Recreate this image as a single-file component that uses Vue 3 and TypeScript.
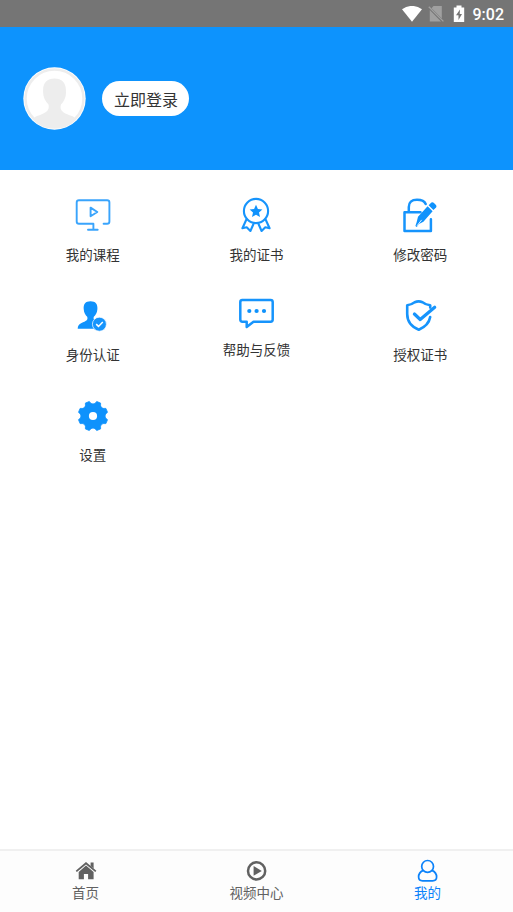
<script setup lang="ts">
import { ref } from 'vue'

type IconName = 'course' | 'certificate' | 'password' | 'identity' | 'feedback' | 'shield' | 'settings'
type TabName = 'home' | 'video' | 'mine'

interface MenuItem {
  icon: IconName
  label: string
}

const menu: MenuItem[] = [
  { icon: 'course', label: '我的课程' },
  { icon: 'certificate', label: '我的证书' },
  { icon: 'password', label: '修改密码' },
  { icon: 'identity', label: '身份认证' },
  { icon: 'feedback', label: '帮助与反馈' },
  { icon: 'shield', label: '授权证书' },
  { icon: 'settings', label: '设置' },
]

const tabs: { name: TabName; label: string }[] = [
  { name: 'home', label: '首页' },
  { name: 'video', label: '视频中心' },
  { name: 'mine', label: '我的' },
]

const active = ref<TabName>('mine')
</script>

<template>
  <div class="screen">
    <div class="status">
      <svg class="wifi" viewBox="0 0 20 16"><path d="M0 3.2Q10-3.4 20 3.2L10 15.8Z" fill="#fff" /></svg>
      <svg class="sim" viewBox="0 0 16 18">
        <path d="M5.5 1H13.8V13.4L3.6 3.2ZM1.8 5L13 16.4H1.8Z" fill="#a0a0a0" />
        <path d="M.8 1.8L15.4 16.4" stroke="#a0a0a0" stroke-width="1.3" />
      </svg>
      <svg class="battery" viewBox="0 0 12 18">
        <path d="M3.5.5H8.5V2.5H11.2V17H.8V2.5H3.5Z" fill="#fff" />
        <path d="M7 4.5L3 10.3H5.5V15L9 9H6.7Z" fill="#757575" />
      </svg>
      <span class="time">9:02</span>
    </div>

    <header class="profile">
      <svg class="avatar" viewBox="0 0 63 63">
        <circle cx="31.5" cy="31.5" r="31.2" fill="#fff" />
        <circle cx="31.5" cy="31.5" r="29" fill="#fff" stroke="#ededed" stroke-width="2.5" />
        <path d="M31.5 11.5C24 11.5 19.8 16 20.1 24C19.8 29 21.8 34 25.5 37.5C27 44 22 46 14 49Q11 50.2 10.6 52A29 29 0 0 0 52.4 52Q52 50.2 49 49C41 46 36 44 38 37.5C41.5 34 43.5 29 42.9 24C43.2 16 39 11.5 31.5 11.5Z" fill="#ededed" />
      </svg>
      <button class="login">立即登录</button>
    </header>

    <main class="menu">
      <div v-for="item in menu" :key="item.icon" class="item">
        <svg class="icon" :class="item.icon" :viewBox="item.icon === 'feedback' ? '0 0 40 35' : '0 0 40 40'">
          <g v-if="item.icon === 'course'" class="line" stroke-width="1.9">
            <path opacity=".85" d="M15 34.7H24.7M20.4 34.7V28.7H6Q3.7 28.7 3.7 26.4V7.6Q3.7 5.3 6 5.3H34.1Q36.4 5.3 36.4 7.6V26.4Q36.4 28.7 34.1 28.7H30.6" />
            <path d="M17.6 12.6L24.3 17L17.6 21.2Z" opacity=".85" />
          </g>
          <g v-else-if="item.icon === 'certificate'" class="line" stroke-width="2.1">
            <circle cx="20" cy="16" r="12.1" />
            <path d="M10.4 24.5L6.4 33.2L10.7 32.3L14.4 36L17.7 28.5M29.6 24.5L33.6 33.2L29.3 32.3L25.6 36L22.3 28.5" />
            <path class="solid" d="M20 9.8L21.9 13.9L26.4 14.4L23 17.5L24 22L20 19.7L16 22L17 17.5L13.6 14.4L18.1 13.9Z" />
          </g>
          <g v-else-if="item.icon === 'password'" class="line" stroke-width="2.5">
            <path d="M20.5 17.2H4.5V36H30.9V24.3M8.8 17V12Q8.8 4.8 17 4.8Q24 4.8 25.7 9" />
            <path class="solid" d="M27.6 11.2L32.6 16.2L23.4 26.8L19 29L16.8 32L15.4 31.1L16.7 27L18 21.7Z" />
            <path class="solid" d="M28.6 10.3L31.4 7.6Q32.6 6.7 33.7 7.8L36 10Q37 11.3 36.1 12.4L33.4 15.1Z" />
            <path d="M17.3 30.5L21.4 25.2" stroke="#fff" stroke-width=".9" />
          </g>
          <g v-else-if="item.icon === 'identity'">
            <path fill="#0f92fc" d="M17.5 6.3C12.6 6.3 10.3 9 10.7 14C10.9 18 12.6 20.3 14.2 21.8C15.3 25.3 13 26 8.5 28Q4.7 29.6 4.7 33.8H25L24.5 26C21.5 25.2 20 24.8 20.8 21.8C22.5 20 24.2 18 24.4 14C24.8 9 22.4 6.3 17.5 6.3Z" />
            <circle cx="26.4" cy="29.2" r="7" fill="#1694fc" stroke="#fff" stroke-width=".7" />
            <path d="M23.2 29.1L25.5 31.4L29.8 27" fill="none" stroke="#fff" stroke-width="1.5" />
          </g>
          <g v-else-if="item.icon === 'feedback'" class="line" stroke-width="2.5">
            <path d="M6 4.9H34.6Q36.7 4.9 36.7 7V24.6Q36.7 26.7 34.6 26.7H17.5L10.7 31.9V26.7H6.4Q4.3 26.7 4.3 24.6V7Q4.3 4.9 6.4 4.9Z" />
            <g fill="#0f92fc" stroke="none"><circle cx="13.3" cy="16" r="2.1" /><circle cx="20.6" cy="16" r="2.1" /><circle cx="28" cy="16" r="2.1" /></g>
          </g>
          <g v-else-if="item.icon === 'shield'" class="line" stroke-width="2.6">
            <path d="M30.2 12.6V10.2Q26 9.8 22.5 7.2Q18.6 5.6 14.7 7.2Q11 9.8 7.2 10.2V19C7.2 26 11 31.5 18.8 34.7C25.5 31.8 29.2 28 30.2 22" />
            <path d="M14.4 19L20.2 24.5L34.7 12.3" stroke-width="3.2" />
          </g>
          <g v-else>
            <path fill="#0f92fc" stroke="#0f92fc" stroke-width=".8" stroke-linejoin="round" d="M23.8 6.5L27.6 8.1Q26.7 14.3 32.9 13.4L34.5 17.2Q29.5 21 34.5 24.8L32.9 28.6Q26.7 27.7 27.6 33.9L23.8 35.5Q20 30.5 16.2 35.5L12.4 33.9Q13.3 27.7 7.1 28.6L5.5 24.8Q10.5 21 5.5 17.2L7.1 13.4Q13.3 14.3 12.4 8.1L16.2 6.5Q20 11.5 23.8 6.5Z" />
            <circle cx="20" cy="21" r="4.1" fill="#fff" />
          </g>
        </svg>
        <span class="label">{{ item.label }}</span>
      </div>
    </main>

    <nav class="tabs">
      <div v-for="tab in tabs" :key="tab.name" class="tab" :class="{ active: active === tab.name }" @click="active = tab.name">
        <svg class="tab-icon" viewBox="0 0 24 24">
          <g v-if="tab.name === 'home'" fill="currentColor">
            <path d="M12 7.6L19.6 14V21.2H14.1V16H9.9V21.2H4.7V14Z" />
            <path d="M2.3 13.4L12 5.2L21.8 13.4" fill="none" stroke="currentColor" stroke-width="1.8" />
            <path d="M16.6 4.4H19.6V10.4L16.6 8Z" />
          </g>
          <g v-else-if="tab.name === 'video'">
            <circle cx="11.6" cy="12.9" r="8.6" fill="none" stroke="currentColor" stroke-width="2.5" />
            <path d="M8.6 8L16.8 12.9L8.6 17.8Z" fill="currentColor" />
          </g>
          <g v-else fill="none" stroke="currentColor" stroke-width="1.7">
            <circle cx="11.6" cy="8.4" r="5.9" />
            <path d="M7.2 12.4C4.3 13.7 2.6 15.8 2.6 19Q2.6 22.8 6.6 22.8H16.6Q20.6 22.8 20.6 19C20.6 15.8 18.9 13.7 16 12.4" />
          </g>
        </svg>
        <span class="tab-label">{{ tab.label }}</span>
      </div>
    </nav>
  </div>
</template>

<style>
body {
  margin: 0;
  background: #fff;
}
</style>

<style scoped>
.screen {
  display: flex;
  flex-direction: column;
  height: 100vh;
  overflow: hidden;
  background: #fff;
  color: #333;
  font-family: "Noto Sans CJK SC", sans-serif;
}
.status {
  display: flex;
  flex: none;
  align-items: center;
  justify-content: flex-end;
  box-sizing: border-box;
  height: 27px;
  padding-right: 9px;
  background: #757575;
}
.wifi {
  width: 20px;
  height: 16px;
  margin-right: 6px;
}
.sim {
  width: 16px;
  height: 18px;
  margin-right: 9px;
}
.battery {
  width: 12px;
  height: 18px;
  margin-right: 8px;
}
.time {
  color: #fff;
  font: 500 16px/27px Roboto, sans-serif;
  padding-top: 2px;
}
.profile {
  display: flex;
  flex: none;
  align-items: center;
  gap: 16px;
  box-sizing: border-box;
  height: 143px;
  padding-left: 23px;
  background: #0d93fd;
}
.avatar {
  width: 63px;
  height: 63px;
}
.login {
  width: 87px;
  height: 35px;
  padding: 1px 0 0 1px;
  border: 0;
  border-radius: 18px;
  background: #fff;
  color: #333;
  font: 16px/34px "Noto Sans CJK SC", sans-serif;
}
.menu {
  display: grid;
  flex: 1;
  grid-template-columns: repeat(3, 1fr);
  grid-auto-rows: 100px;
  align-content: start;
  padding: 25px 11px 0;
}
.item {
  display: flex;
  flex-direction: column;
  align-items: center;
}
.icon {
  width: 40px;
  height: 40px;
}
.icon.feedback {
  height: 35px;
}
.line {
  fill: none;
  stroke: #1694fc;
  stroke-linecap: round;
  stroke-linejoin: round;
}
.solid {
  fill: #0f92fc;
  stroke-width: 0;
}
.label {
  margin-top: 9px;
  font-size: 13.5px;
  line-height: 20px;
}
.tabs {
  display: flex;
  flex: none;
  box-sizing: border-box;
  height: 63px;
  padding-top: 7px;
  border-top: 2px solid #f0f0f0;
  background: #fdfdfd;
}
.tab {
  display: flex;
  flex: 1;
  flex-direction: column;
  align-items: center;
  color: #616161;
}
.tab.active {
  color: #0b82fa;
}
.tab-icon {
  width: 24px;
  height: 24px;
}
.tab-label {
  font-size: 13.5px;
  line-height: 20px;
}
</style>
